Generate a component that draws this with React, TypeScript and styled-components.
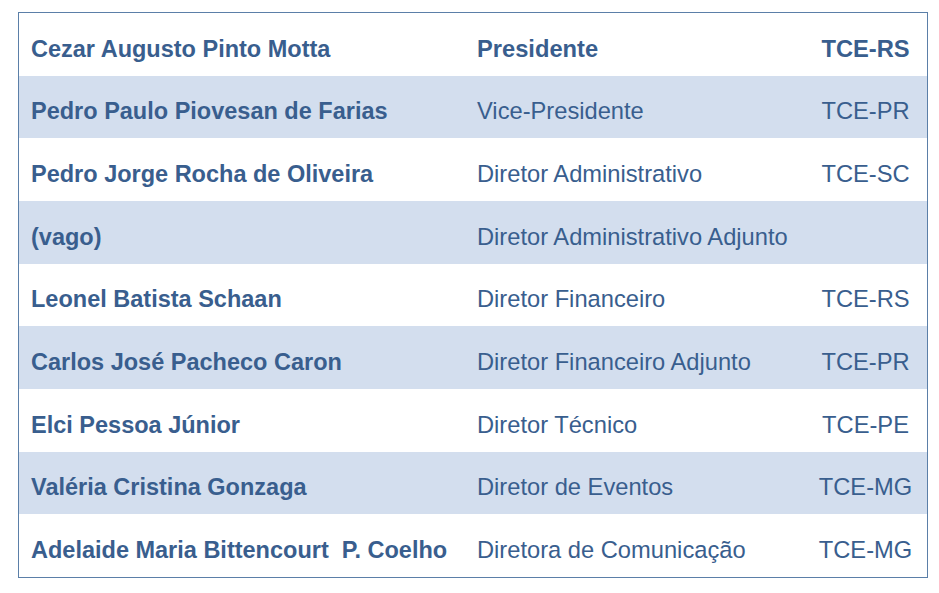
import React from "react";
import styled, { createGlobalStyle } from "styled-components";

type Member = {
  name: string;
  role: string;
  court: string;
};

const members: Member[] = [
  { name: "Cezar Augusto Pinto Motta", role: "Presidente", court: "TCE-RS" },
  { name: "Pedro Paulo Piovesan de Farias", role: "Vice-Presidente", court: "TCE-PR" },
  { name: "Pedro Jorge Rocha de Oliveira", role: "Diretor Administrativo", court: "TCE-SC" },
  { name: "(vago)", role: "Diretor Administrativo Adjunto", court: "" },
  { name: "Leonel Batista Schaan", role: "Diretor Financeiro", court: "TCE-RS" },
  { name: "Carlos José Pacheco Caron", role: "Diretor Financeiro Adjunto", court: "TCE-PR" },
  { name: "Elci Pessoa Júnior", role: "Diretor Técnico", court: "TCE-PE" },
  { name: "Valéria Cristina Gonzaga", role: "Diretor de Eventos", court: "TCE-MG" },
  { name: "Adelaide Maria Bittencourt  P. Coelho", role: "Diretora de Comunicação", court: "TCE-MG" },
];

const GlobalStyle = createGlobalStyle`
  html, body {
    margin: 0;
    padding: 0;
    background: #ffffff;
  }
  body {
    font-family: "Liberation Sans", Arial, sans-serif;
  }
`;

const Page = styled.div`
  width: 939px;
  height: 593px;
  padding: 12px 0 0 18px;
  box-sizing: border-box;
`;

const Board = styled.div`
  width: 910px;
  height: 566px;
  box-sizing: border-box;
  border: 1px solid #5b7fa8;
  display: grid;
  grid-template-rows: repeat(9, 1fr);
`;

const Row = styled.div<{ $shaded: boolean }>`
  display: grid;
  grid-template-columns: 459px 326px 1fr;
  align-items: center;
  padding-top: 10px;
  box-sizing: border-box;
  background: ${(props) => (props.$shaded ? "#d3deee" : "#ffffff")};
  color: #395e8e;
  font-size: 23.7px;
  white-space: pre;
`;

const Name = styled.div`
  padding-left: 12px;
  font-weight: bold;
  font-size: 23.5px;
`;

const Role = styled.div<{ $bold: boolean }>`
  margin-left: -1px;
  font-weight: ${(props) => (props.$bold ? "bold" : "normal")};
`;

const Court = styled.div<{ $bold: boolean }>`
  text-align: center;
  font-weight: ${(props) => (props.$bold ? "bold" : "normal")};
`;

const App: React.FC = () => {
  return (
    <Page>
      <GlobalStyle />
      <Board>
        {members.map((m, index) => (
          <Row key={index} $shaded={index % 2 === 1}>
            <Name>{m.name}</Name>
            <Role $bold={index === 0}>{m.role}</Role>
            <Court $bold={index === 0}>{m.court}</Court>
          </Row>
        ))}
      </Board>
    </Page>
  );
};

export default App;
